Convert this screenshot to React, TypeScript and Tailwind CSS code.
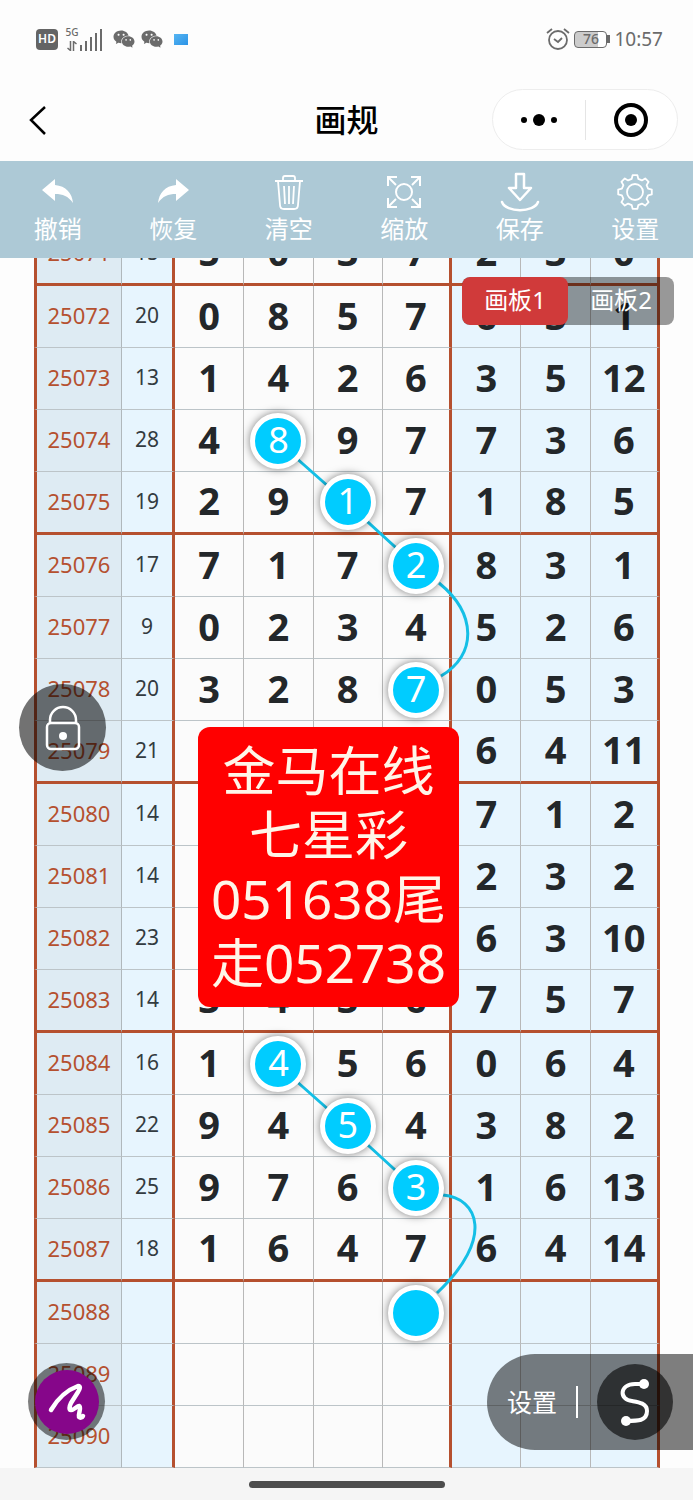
import { useState } from "react";
import type { ReactNode } from "react";
import { AiFillWechat } from "react-icons/ai";

interface DrawRow {
  period: string;
  sum: string;
  digits: string[];
  marked?: number;
}

const ROWS: DrawRow[] = [
  { period: "25071", sum: "15", digits: ["5", "0", "3", "7", "2", "3", "0"] },
  { period: "25072", sum: "20", digits: ["0", "8", "5", "7", "6", "3", "1"] },
  { period: "25073", sum: "13", digits: ["1", "4", "2", "6", "3", "5", "12"] },
  { period: "25074", sum: "28", digits: ["4", "8", "9", "7", "7", "3", "6"], marked: 1 },
  { period: "25075", sum: "19", digits: ["2", "9", "1", "7", "1", "8", "5"], marked: 2 },
  { period: "25076", sum: "17", digits: ["7", "1", "7", "2", "8", "3", "1"], marked: 3 },
  { period: "25077", sum: "9", digits: ["0", "2", "3", "4", "5", "2", "6"] },
  { period: "25078", sum: "20", digits: ["3", "2", "8", "7", "0", "5", "3"], marked: 3 },
  { period: "25079", sum: "21", digits: ["", "", "", "", "6", "4", "11"] },
  { period: "25080", sum: "14", digits: ["", "", "", "", "7", "1", "2"] },
  { period: "25081", sum: "14", digits: ["", "", "", "", "2", "3", "2"] },
  { period: "25082", sum: "23", digits: ["", "", "", "", "6", "3", "10"] },
  { period: "25083", sum: "14", digits: ["3", "4", "3", "6", "7", "5", "7"] },
  { period: "25084", sum: "16", digits: ["1", "4", "5", "6", "0", "6", "4"], marked: 1 },
  { period: "25085", sum: "22", digits: ["9", "4", "5", "4", "3", "8", "2"], marked: 2 },
  { period: "25086", sum: "25", digits: ["9", "7", "6", "3", "1", "6", "13"], marked: 3 },
  { period: "25087", sum: "18", digits: ["1", "6", "4", "7", "6", "4", "14"] },
  { period: "25088", sum: "", digits: ["", "", "", "", "", "", ""], marked: 3 },
  { period: "25089", sum: "", digits: ["", "", "", "", "", "", ""] },
  { period: "25090", sum: "", digits: ["", "", "", "", "", "", ""] },
];

const NOTE_LINES = ["金马在线", "七星彩", "051638尾", "走052738"];

const TOOLS: { label: string; icon: ReactNode }[] = [
  {
    label: "撤销",
    icon: (
      <svg viewBox="0 0 40 40" className="size-10" fill="currentColor">
        <path d="M4 18 17 7v6c11 1 17 8 18 18-5-7-10-9-18-9v7Z" />
      </svg>
    ),
  },
  {
    label: "恢复",
    icon: (
      <svg viewBox="0 0 40 40" className="size-10" fill="currentColor">
        <path d="M36 18 23 7v6C12 14 6 21 5 31c5-7 10-9 18-9v7Z" />
      </svg>
    ),
  },
  {
    label: "清空",
    icon: (
      <svg viewBox="0 0 40 40" className="size-10" fill="none" stroke="currentColor" strokeWidth="1.8">
        <path d="M6 9h28M14 9V6q0-2 2-2h8q2 0 2 2v3M9 9l2 24q0 4 4 4h10q4 0 4-4l2-24M15 14l1 18M20 14v18M25 14l-1 18" />
      </svg>
    ),
  },
  {
    label: "缩放",
    icon: (
      <svg viewBox="0 0 40 40" className="size-10" fill="none" stroke="currentColor" strokeWidth="2">
        <circle cx="20" cy="20" r="8" />
        <path d="M4 14V5h9M27 5h9v9M36 26v9h-9M13 35H4v-9M4 5l8 8M36 5l-8 8M36 35l-8-8M4 35l8-8" />
      </svg>
    ),
  },
  {
    label: "保存",
    icon: (
      <svg viewBox="0 0 40 40" className="size-10" fill="none" stroke="currentColor" strokeWidth="2.500" strokeLinejoin="round" strokeLinecap="round">
        <path d="M16 2h8v14h7L20 28 9 16h7Z" />
        <path d="M2 30c4 11 32 11 36 0" />
      </svg>
    ),
  },
  {
    label: "设置",
    icon: (
      <svg viewBox="0 0 40 40" className="size-10" fill="none" stroke="currentColor" strokeWidth="1.8" strokeLinejoin="round">
        <circle cx="20" cy="20" r="8" />
        <path d="M16.700 6.900 17.600 3.200 22.400 3.200 23.300 6.900 26.900 8.400 30.200 6.400 33.600 9.800 31.600 13.100 33.100 16.700 36.800 17.600V22.400L33.100 23.300 31.600 26.900 33.600 30.200 30.200 33.600 26.900 31.600 23.300 33.100 22.400 36.800H17.600L16.700 33.100 13.100 31.600 9.800 33.600 6.400 30.200 8.400 26.900 6.900 23.300 3.200 22.400V17.600L6.900 16.700 8.400 13.100 6.400 9.800 9.800 6.400 13.100 8.400Z" />
      </svg>
    ),
  },
];

function StatusBar() {
  return (
    <div className="flex h-[78px] items-center justify-between pl-9 pr-[30px] text-[#6b6b6b]">
      <div className="flex items-center">
        <span className="flex h-[21px] w-[22px] items-center justify-center rounded-sm bg-[#646464] text-xs font-semibold text-white">
          HD
        </span>
        <div className="ml-1.5 flex h-6 items-end">
          <div className="flex h-6 w-4 flex-col items-center justify-between">
            <span className="text-[10px] font-medium leading-[10px]">5G</span>
            <svg viewBox="0 0 10 10" className="size-[10px]" fill="none" stroke="currentColor" strokeWidth="1.5">
              <path d="M3.500 0v9.500L.5 7M6.500 10V.5L9.500 3" />
            </svg>
          </div>
          <svg viewBox="0 0 22 22" className="size-[22px]" fill="currentColor">
            <path d="M0 16h2v6H0zM5 12h2v10H5zM10 8h2v14h-2zM15 4h2v18h-2zM20 0h2v22h-2z" />
          </svg>
        </div>
        <AiFillWechat className="ml-2.5 size-6" />
        <AiFillWechat className="ml-1 size-6" />
        <span className="ml-2.5 h-[11px] w-3.5 bg-linear-to-br from-[#55b5f2] to-[#2a93e6]" />
      </div>
      <div className="flex items-center">
        <svg viewBox="0 0 24 24" className="size-6" fill="none" stroke="currentColor" strokeWidth="1.8">
          <circle cx="12" cy="13" r="9" />
          <path d="m8 12 4 3 4-4M1 6l5-4M23 6l-5-4" />
        </svg>
        <span className="ml-1 flex h-[17px] w-[33px] items-center justify-center rounded-sm border border-[#6b6b6b] bg-linear-to-r from-[#cccccc] from-75% to-white to-75% text-sm font-medium leading-none">
          76
        </span>
        <span className="h-2 w-[3px] bg-[#6b6b6b]" />
        <span className="ml-1 text-[19px]">10:57</span>
      </div>
    </div>
  );
}

function TitleBar() {
  return (
    <header className="grid h-[83px] grid-cols-[1fr_auto_1fr] items-center px-[15px]">
      <button aria-label="返回" className="ml-[11px] justify-self-start text-black">
        <svg viewBox="0 0 24 32" className="h-8 w-6" fill="none" stroke="currentColor" strokeWidth="2.500">
          <path d="M19 3 5 16l14 14" />
        </svg>
      </button>
      <h1 className="text-[32px] font-medium leading-10 text-black">画规</h1>
      <div className="flex h-[61px] w-[186px] items-center justify-self-end rounded-full border border-[#ededed] bg-white">
        <button aria-label="更多" className="flex flex-1 items-center justify-center">
          <svg viewBox="0 0 36 12" className="h-3 w-9">
            <circle cx="3" cy="6" r="3" />
            <circle cx="18" cy="6" r="6" />
            <circle cx="33" cy="6" r="3" />
          </svg>
        </button>
        <span className="h-10 w-px bg-[#e5e5e5]" />
        <button aria-label="关闭" className="flex flex-1 items-center justify-center">
          <svg viewBox="0 0 34 34" className="size-[34px]">
            <circle cx="17" cy="17" r="15" fill="none" stroke="black" strokeWidth="4" />
            <circle cx="17" cy="17" r="6" />
          </svg>
        </button>
      </div>
    </header>
  );
}

function Toolbar() {
  return (
    <nav className="relative z-20 grid h-[97px] grid-cols-6 bg-[#adc9d6] text-white">
      {TOOLS.map((tool) => (
        <button key={tool.label} className="flex flex-col items-center justify-start gap-px pt-[11px]">
          {tool.icon}
          <span className="text-2xl leading-8">{tool.label}</span>
        </button>
      ))}
    </nav>
  );
}

function Marker({ value }: { value: string }) {
  return (
    <span className="relative z-10 mx-auto flex size-14 items-center justify-center rounded-full border-[5px] border-white bg-[#00ccff] pb-0.5 text-[36px] font-normal text-white shadow-[0_0_8px_rgba(0,0,0,0.5)]">
      {value}
    </span>
  );
}

function DrawTable() {
  return (
    <table className="w-full table-fixed border-separate border-spacing-0 text-center">
      <colgroup>
        <col className="w-[88px]" />
        <col className="w-[53px]" />
        <col span={7} />
      </colgroup>
      <tbody>
        {ROWS.map((row, idx) => {
          // every fourth draw closes a block with a thick rule
          const closesBlock = idx % 4 === 0 && idx <= 16;
          const line = closesBlock ? "border-b-3 border-b-[#b5502f]" : "border-b border-b-[#bcc4c8]";
          return (
            <tr key={row.period} className={closesBlock ? "h-[63px]" : "h-[62px]"}>
              <th
                scope="row"
                className={`border-l-3 border-r border-l-[#b5502f] border-r-[#b0b8bc] bg-[#deebf3] px-0 pb-[3px] pt-0 text-[22px] font-normal leading-8 text-[#b5502f] ${line}`}
              >
                {row.period}
              </th>
              <td
                className={`border-r-3 border-r-[#b5502f] bg-[#e7f5fe] px-0 pb-[3px] pt-0 text-[21px] leading-8 text-[#333b40] ${line}`}
              >
                {row.sum}
              </td>
              {row.digits.map((digit, col) => (
                <td
                  key={col}
                  className={`px-0 pt-0 text-[38px] font-bold leading-[44px] text-[#23272a] ${
                    row.marked === col ? "pb-0" : "pb-1"
                  } ${
                    col === 3 || col === 6
                      ? "border-r-3 border-r-[#b5502f]"
                      : "border-r border-r-[#b8b8b8]"
                  } ${col < 4 ? "bg-[#fbfbfb]" : "bg-[#e7f5fe]"} ${line}`}
                >
                  {row.marked === col ? <Marker value={digit} /> : digit}
                </td>
              ))}
            </tr>
          );
        })}
      </tbody>
    </table>
  );
}

function Trails() {
  return (
    <svg
      viewBox="34 223 626 1245"
      preserveAspectRatio="none"
      className="pointer-events-none absolute inset-0 size-full"
      fill="none"
      stroke="#14bfe6"
      strokeWidth="3"
    >
      <path d="M277 441 347 503 416 566M439 583C477 614 477 655 441 676" />
      <path d="M277 1064 347 1126 416 1189M443 1195C478 1198 495 1238 437 1293" />
    </svg>
  );
}

export default function App() {
  const [board, setBoard] = useState(1);

  return (
    <div className="flex min-h-screen flex-col bg-[#fdfdfd] font-['Noto_Sans','Noto_Sans_CJK_SC',sans-serif]">
      <StatusBar />
      <TitleBar />
      <Toolbar />

      <main className="relative overflow-hidden">
        <div className="relative ml-[34px] mr-[33px] -mt-[35px]">
          <DrawTable />
          <Trails />
        </div>

        {/* Board switch */}
        <div className="absolute right-[19px] top-[19px] z-20 flex h-12 overflow-hidden rounded-lg bg-black/40 text-2xl text-white">
          {[1, 2].map((n) => (
            <button
              key={n}
              onClick={() => setBoard(n)}
              className={`w-[106px] rounded-lg pb-0.5 ${board === n ? "bg-[#d03a3a]" : ""}`}
            >
              画板{n}
            </button>
          ))}
        </div>

        {/* Note dropped on the canvas */}
        <div className="absolute left-[198px] top-[469px] z-20 w-[261px] rounded-xl bg-[#ff0000] py-3 text-center text-[53px] leading-[64px] text-[#fff5e8]">
          {NOTE_LINES.map((text) => (
            <p key={text} className="whitespace-nowrap">
              {text}
            </p>
          ))}
        </div>

        {/* Lock */}
        <button
          aria-label="锁定"
          className="absolute left-[19px] top-[426px] z-20 flex size-[87px] items-center justify-center rounded-full bg-black/55 text-white"
        >
          <svg viewBox="0 0 36 46" className="h-[46px] w-9" fill="none" stroke="currentColor" strokeWidth="2.500">
            <rect x="2" y="18" width="32" height="26" rx="4" />
            <path d="M5 18v-3a13 13 0 0 1 26 0v3" />
            <circle cx="18" cy="31" r="4" fill="currentColor" stroke="none" />
          </svg>
        </button>

        {/* Pen */}
        <button
          aria-label="画笔"
          className="absolute bottom-[28px] left-7 z-20 flex size-[77px] items-center justify-center rounded-full bg-black/50 text-white"
        >
          <span className="flex size-16 items-center justify-center rounded-full bg-[#86068a]">
            <svg viewBox="0 0 40 40" className="size-10" fill="none" stroke="currentColor" strokeWidth="4.500" strokeLinecap="round" strokeLinejoin="round">
              <path d="M4 28C11 16 20 8 31 4c3 0 2 3 0 6l-7 11c-2 4-2 7 0 7 3 0 6-4 8-4 3 1-1 8 0 11 1 1 3 1 4-1" />
            </svg>
          </span>
        </button>

        {/* Line settings */}
        <div className="absolute bottom-[18px] right-0 z-20 flex h-24 items-center rounded-l-full bg-black/50 px-5 text-white">
          <button className="text-[25px] leading-8">设置</button>
          <span className="ml-[19px] h-8 w-0.5 bg-white" />
          <button aria-label="曲线" className="ml-[19px] flex size-[76px] items-center justify-center rounded-full bg-black/60">
            <svg viewBox="0 0 30 48" className="h-12 w-[30px]" fill="none" stroke="currentColor" strokeWidth="4">
              <path d="M24 6H15C-1 6-1 22 12 23c6 1 15 2 15 10 0 10-9 10-21 10" />
              <circle cx="24" cy="6" r="5" fill="currentColor" stroke="none" />
              <circle cx="6" cy="43" r="5" fill="currentColor" stroke="none" />
            </svg>
          </button>
        </div>
      </main>

      <footer className="flex flex-1 justify-center bg-[#f5f5f5] pb-3 pt-[13px]">
        <span className="h-[7px] w-[196px] rounded-full bg-[#4d4d4d]" />
      </footer>
    </div>
  );
}
